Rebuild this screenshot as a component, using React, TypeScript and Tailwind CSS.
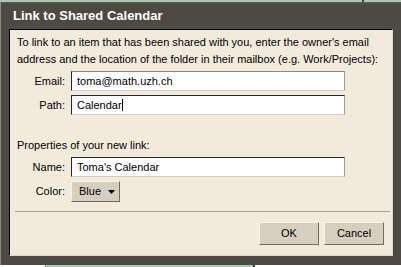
import React from "react";

const font = { fontFamily: '"Liberation Sans", Arial, sans-serif' };

function Field({ label, value, cursor, topDark = true }: { label: string; value: string; cursor?: boolean; topDark?: boolean }) {
  return (
    <div className="flex items-center">
      <div className="w-[48px] text-right text-[11px] text-black">{label}</div>
      <div
        className={`ml-[6px] w-[274px] h-[20px] bg-white border border-l-[#2a2926] border-r-[#a39d90] border-b-[#d2ccbf] flex items-center pl-[5px] text-[11px] text-black ${topDark ? "border-t-[#2a2926]" : "border-t-[#8e897e]"}`}
      >
        <span>{value}</span>
        {cursor && <span className="w-[1px] h-[12px] bg-black ml-[0px]" />}
      </div>
    </div>
  );
}

function Btn({ children, w }: { children: React.ReactNode; w: string }) {
  return (
    <div
      className={`${w} h-[23px] bg-[#d6cfbf] border border-t-[#f7f3ea] border-l-[#f7f3ea] border-r-[#6f6b62] border-b-[#6f6b62] flex items-center justify-center text-[11px] text-black`}
    >
      {children}
    </div>
  );
}

export default function App() {
  return (
    <div className="w-[401px] h-[267px] flex flex-col overflow-hidden bg-white" style={font}>
      <div className="h-[2px] flex">
        <div className="w-[362px] bg-[#a9c9b3]" />
        <div className="w-[2px] bg-[#3a3a36]" />
        <div className="flex-1 bg-[#a9c9b3]" />
      </div>
      <div className="flex-1 bg-[#4d4a44] border-l border-l-[#8d8a82] border-t border-t-[#5f5c55] flex flex-col pr-[8px] pl-[8px] pb-[9px]">
        <div className="h-[26px] flex items-center pl-[4px] text-[13px] font-bold text-white">Link to Shared Calendar</div>
        <div className="flex-1 bg-[#f2ebdc] border border-t-black border-l-black border-r-[#dcd5c6] border-b-[#dcd5c6] flex flex-col pl-[7px] pr-[4px] pt-[4px]">
          <div className="text-[11px] leading-[17px] text-black">
            To link to an item that has been shared with you, enter the owner's email address and the location of the folder in their mailbox (e.g. Work/Projects):
          </div>
          <div className="mt-[3px] flex flex-col gap-[4px]">
            <Field label="Email:" value="toma@math.uzh.ch" topDark={false} />
            <Field label="Path:" value="Calendar" cursor />
          </div>
          <div className="mt-[22px] text-[11px] leading-[17px] text-black">Properties of your new link:</div>
          <div className="mt-[3px] flex flex-col gap-[4px]">
            <Field label="Name:" value="Toma's Calendar" />
            <div className="flex items-center">
              <div className="w-[48px] text-right text-[11px] text-black">Color:</div>
              <div className="ml-[6px] w-[49px] h-[21px] bg-[#d6cfbf] border border-t-[#f7f3ea] border-l-[#f7f3ea] border-r-[#6f6b62] border-b-[#6f6b62] flex items-center pl-[7px] text-[11px] text-black">
                <span>Blue</span>
                <svg width="7" height="4" viewBox="0 0 7 4" className="ml-[7px]">
                  <polygon points="0,0 7,0 3.5,4" fill="#000" />
                </svg>
              </div>
            </div>
          </div>
          <div className="mt-[9px] mr-[0px] ml-[-2px] h-[1px] bg-[#a8a191] w-[375px]" />
          <div className="mt-[10px] flex justify-end gap-[5px] pr-[4px]">
            <Btn w="w-[60px]">OK</Btn>
            <Btn w="w-[60px]">Cancel</Btn>
          </div>
        </div>
      </div>
      <div className="h-[2px] flex">
        <div className="w-[45px] bg-white" />
        <div className="w-[1px] bg-[#888]" />
        <div className="w-[207px] bg-[#a9c9b3]" />
        <div className="w-[2px] bg-[#3a3a36]" />
        <div className="flex-1 bg-white" />
      </div>
    </div>
  );
}
